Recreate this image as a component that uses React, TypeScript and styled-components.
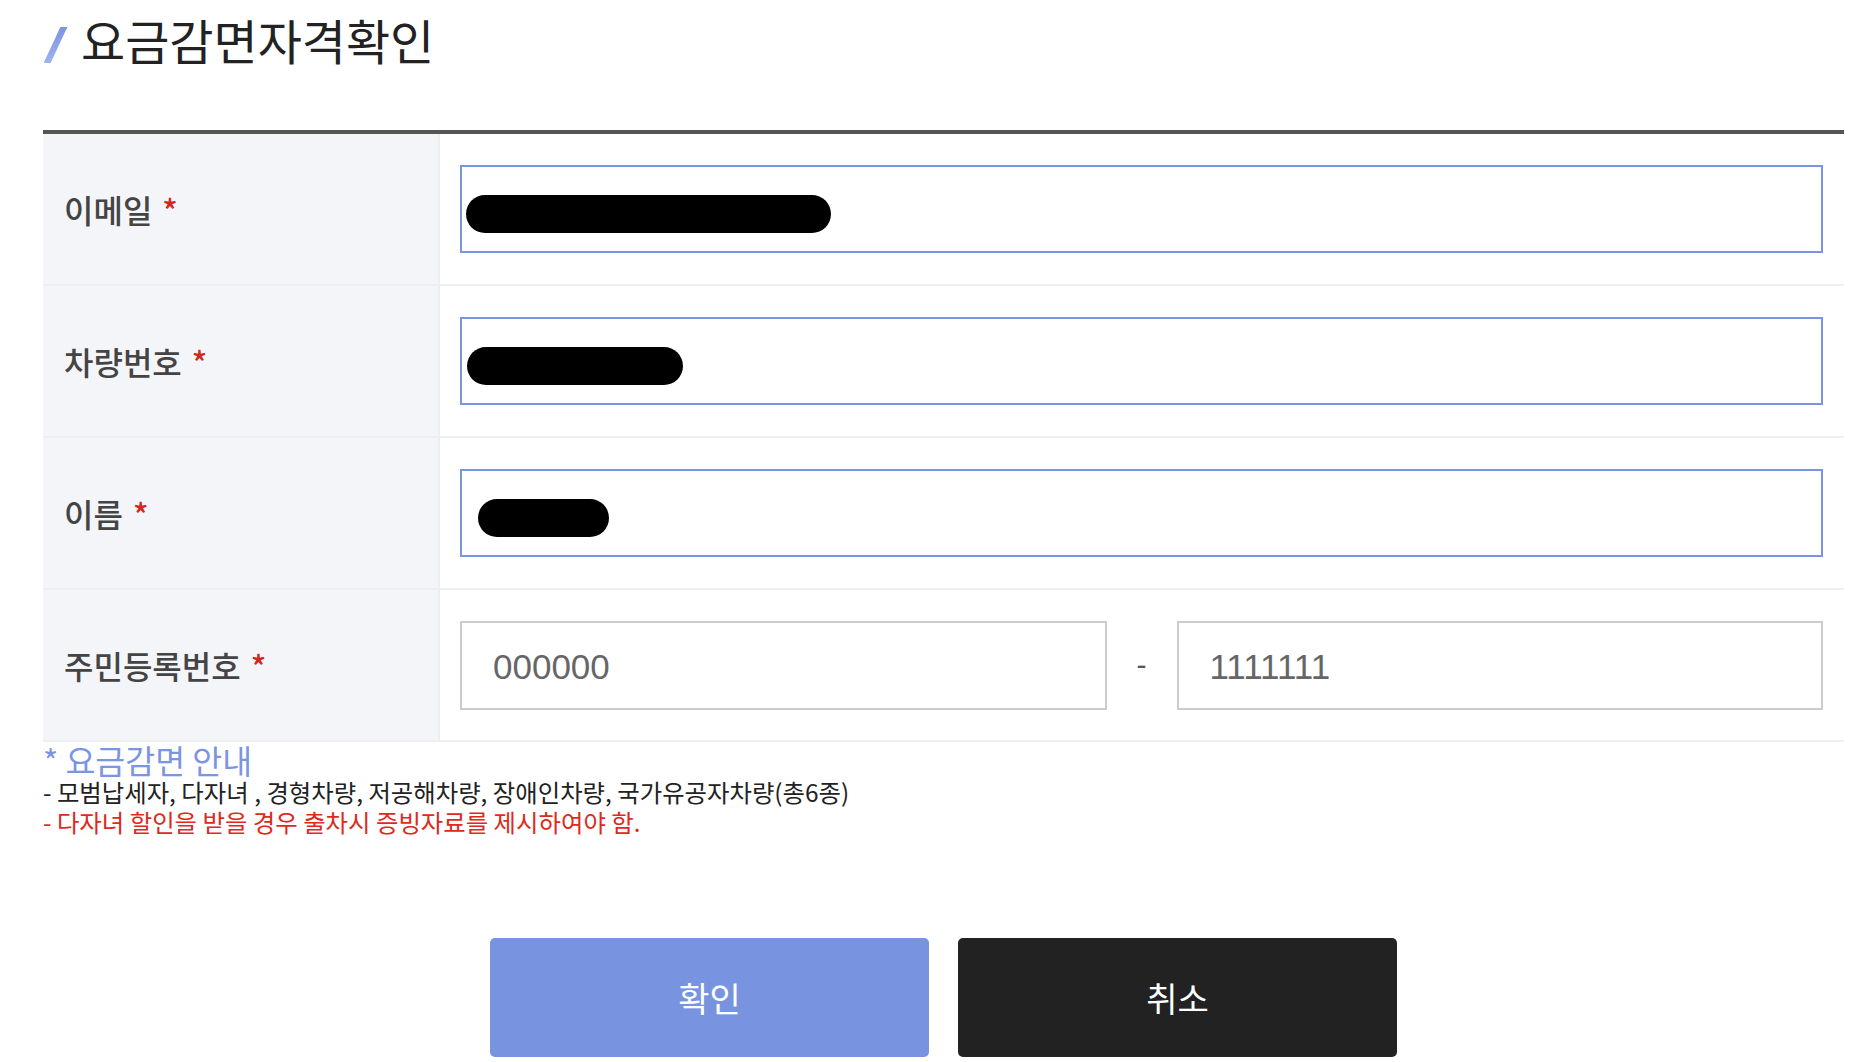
import styled, { createGlobalStyle } from 'styled-components'

const GlobalStyle = createGlobalStyle`
  html, body {
    margin: 0;
    padding: 0;
    background: #fff;
  }
  body {
    font-family: "Noto Sans CJK KR", "Noto Sans", sans-serif;
    color: #222;
  }
  * {
    box-sizing: border-box;
  }
`

const Page = styled.main`
  padding: 0 12px 0 43px;
`

const Header = styled.header`
  height: 130px;
  display: flex;
  align-items: flex-start;
  gap: 22px;
  padding-top: 11px;
`

const Slash = styled.span`
  display: block;
  width: 7px;
  height: 36px;
  margin: 16px 0 0 9px;
  background: linear-gradient(180deg, #7b95e3 0%, #9fb2ec 100%);
  transform: skewX(-25deg);
`

const Title = styled.h1`
  margin: 0;
  font-size: 48px;
  font-weight: 400;
  line-height: 56px;
  color: #222;
`

const Form = styled.section`
  border-top: 4px solid #555;
`

const Row = styled.div`
  display: grid;
  grid-template-columns: 397px 1fr;
  height: 152px;
  border-bottom: 2px solid #eeeff1;
`

const Label = styled.div`
  display: flex;
  align-items: center;
  padding-left: 21px;
  background: #f4f5f9;
  border-right: 2px solid #eceef1;
  font-size: 32px;
  font-weight: 500;
  color: #444;
`

const Required = styled.span`
  margin-left: 10px;
  color: #d0291d;
`

const Cell = styled.div`
  display: flex;
  align-items: center;
  padding: 0 21px 0 20px;
`

const Field = styled.div<{ $inset?: number }>`
  flex: 1;
  height: 88px;
  display: flex;
  align-items: center;
  padding: 10px 0 0 ${({ $inset }) => $inset ?? 4}px;
  border: 2px solid #7b95e3;
  background: #fff;
`

const Redaction = styled.span<{ $width: number; $height?: number }>`
  display: block;
  width: ${({ $width }) => $width}px;
  height: ${({ $height }) => $height ?? 38}px;
  border-radius: 19px;
  background: #000;
`

const SplitCell = styled(Cell)`
  display: grid;
  grid-template-columns: 1fr 70px 1fr;
  align-items: center;
`

const NumberInput = styled.input`
  width: 100%;
  height: 89px;
  padding: 4px 0 0 31px;
  border: 2px solid #cccccc;
  border-radius: 0;
  outline: none;
  font-family: "Liberation Sans", Arial, sans-serif;
  font-size: 35px;
  color: #666;

  &::placeholder {
    color: #666;
    opacity: 1;
  }
`

const Dash = styled.span`
  text-align: center;
  font-family: "Liberation Sans", Arial, sans-serif;
  font-size: 30px;
  color: #555;
`

const Notice = styled.div`
  padding-top: 1px;
`

const NoticeTitle = styled.p`
  margin: 0;
  font-size: 32.5px;
  line-height: 34px;
  font-weight: 400;
  color: #7b95e3;
`

const NoticeLine = styled.p<{ $warn?: boolean }>`
  margin: 0;
  font-size: 24.4px;
  line-height: 30px;
  color: ${({ $warn }) => ($warn ? '#e0281c' : '#222')};
`

const Actions = styled.div`
  display: flex;
  justify-content: center;
  gap: 29px;
  margin-top: 101px;
`

const Button = styled.button<{ $variant: 'primary' | 'dark' }>`
  width: 439px;
  height: 119px;
  border: none;
  border-radius: 5px;
  background: ${({ $variant }) => ($variant === 'primary' ? '#7894e0' : '#222')};
  color: #fff;
  font-family: "Noto Sans CJK KR", "Noto Sans", sans-serif;
  font-size: 34px;
  font-weight: 400;
  cursor: pointer;
`

const fields = [
  { label: '이메일', redaction: 365, inset: 4 },
  { label: '차량번호', redaction: 216, inset: 5 },
  { label: '이름', redaction: 131, inset: 16 },
]

export default function App() {
  return (
    <>
      <GlobalStyle />
      <Page>
        <Header>
          <Slash />
          <Title>요금감면자격확인</Title>
        </Header>

        <Form>
          {fields.map(({ label, redaction, inset }) => (
            <Row key={label}>
              <Label>
                {label}
                <Required>*</Required>
              </Label>
              <Cell>
                <Field $inset={inset}>
                  <Redaction $width={redaction} />
                </Field>
              </Cell>
            </Row>
          ))}
          <Row>
            <Label>
              주민등록번호
              <Required>*</Required>
            </Label>
            <SplitCell>
              <NumberInput placeholder="000000" />
              <Dash>-</Dash>
              <NumberInput placeholder="1111111" />
            </SplitCell>
          </Row>
        </Form>

        <Notice>
          <NoticeTitle>* 요금감면 안내</NoticeTitle>
          <NoticeLine>- 모범납세자, 다자녀 , 경형차량, 저공해차량, 장애인차량, 국가유공자차량(총6종)</NoticeLine>
          <NoticeLine $warn>- 다자녀 할인을 받을 경우 출차시 증빙자료를 제시하여야 함.</NoticeLine>
        </Notice>

        <Actions>
          <Button $variant="primary">확인</Button>
          <Button $variant="dark">취소</Button>
        </Actions>
      </Page>
    </>
  )
}
